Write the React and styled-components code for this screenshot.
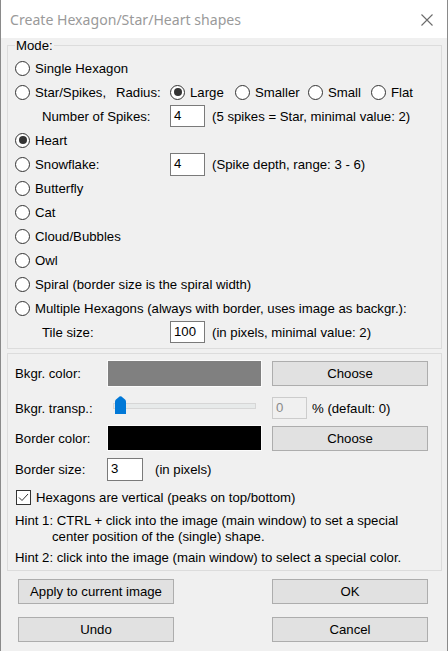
import React from 'react';
import styled, { createGlobalStyle } from 'styled-components';

const GlobalStyle = createGlobalStyle`
  html, body {
    margin: 0;
    padding: 0;
    background: #f0f0f0;
  }
  body {
    font-family: "Liberation Sans", Arial, sans-serif;
    font-size: 13.2px;
    color: #000;
  }
`;

const Window = styled.div`
  box-sizing: border-box;
  width: 448px;
  height: 651px;
  background: #f0f0f0;
  border-left: 1px solid #8a8a8a;
  border-right: 1px solid #8a8a8a;
  overflow: hidden;
`;

const TitleBar = styled.div`
  height: 38px;
  background: #fff;
  display: flex;
  align-items: center;
  justify-content: space-between;
  padding: 0 14px 0 9px;
  box-sizing: border-box;
`;

const Title = styled.div`
  font-family: "Noto Sans", "Open Sans", sans-serif;
  font-size: 14.1px;
  color: #9a9a9a;
  padding-top: 1px;
`;

const CloseIcon = styled.svg`
  width: 12px;
  height: 12px;
  margin-top: 1px;
`;

const Body = styled.div`
  padding: 0 5px 0 6px;
`;

const ModeGroup = styled.fieldset`
  margin: 0;
  padding: 3px 0 4px 7px;
  border: 1px solid #dcdcdc;
  min-width: 0;
`;

const Legend = styled.legend`
  margin-left: 0;
  padding: 0 1px;
  line-height: 15px;
`;

const Group = styled.div`
  margin-top: 4px;
  border: 1px solid #dcdcdc;
  padding: 6px 12px 4px 7px;
`;

const Row = styled.div`
  display: flex;
  align-items: center;
  height: ${p => p.$h || 24}px;
  margin-top: ${p => p.$top || 0}px;
  white-space: nowrap;
`;

const Cell = styled.div`
  display: flex;
  align-items: center;
  flex: none;
  width: ${p => (p.$w ? `${p.$w}px` : 'auto')};
  padding-left: ${p => p.$indent || 0}px;
  box-sizing: border-box;
  margin-left: ${p => p.$ml || 0}px;
`;

const Circle = styled.span`
  box-sizing: border-box;
  width: 15px;
  height: 15px;
  border: 1px solid #333;
  border-radius: 50%;
  background: #fff;
  display: flex;
  align-items: center;
  justify-content: center;
  flex: none;
  margin-right: 5px;
  &::after {
    content: '';
    width: 8px;
    height: 8px;
    border-radius: 50%;
    background: #333;
    display: ${p => (p.$on ? 'block' : 'none')};
  }
`;

const Radio = ({ on, children, w }) => (
  <Cell $w={w}>
    <Circle $on={on} />
    <span>{children}</span>
  </Cell>
);

const Input = styled.div`
  box-sizing: border-box;
  width: ${p => p.$w || 35}px;
  height: ${p => p.$h || 22}px;
  border: 1px solid ${p => (p.$disabled ? '#cccccc' : '#7a7a7a')};
  background: ${p => (p.$disabled ? '#f0f0f0' : '#fff')};
  color: ${p => (p.$disabled ? '#8a8a8a' : '#000')};
  padding: 2px 0 0 3px;
  line-height: 15px;
  flex: none;
`;

const Note = styled.span`
  margin-left: ${p => p.$ml || 7}px;
`;

const Label = styled.div`
  width: 92px;
  flex: none;
`;

const Swatch = styled.div`
  box-sizing: border-box;
  width: 155px;
  height: ${p => p.$h || 27}px;
  background: ${p => p.$color};
  border: 1px solid #fbfbfb;
  flex: none;
`;

const Button = styled.button`
  box-sizing: border-box;
  width: 156px;
  height: 25px;
  margin-left: ${p => p.$ml || 0}px;
  background: #e1e1e1;
  border: 1px solid #adadad;
  font-family: "Liberation Sans", Arial, sans-serif;
  font-size: 13.2px;
  color: #000;
  padding: 0;
  flex: none;
`;

const SliderBox = styled.div`
  position: relative;
  width: 155px;
  height: 24px;
  flex: none;
`;

const Track = styled.div`
  position: absolute;
  left: 6px;
  top: 7px;
  width: 141px;
  height: 4px;
  background: #e7eaea;
  border: 1px solid #d6d6d6;
`;

const Thumb = styled.svg`
  position: absolute;
  left: 8px;
  top: 0px;
  width: 11px;
  height: 18px;
`;

const CheckBox = styled.span`
  box-sizing: border-box;
  width: 15px;
  height: 15px;
  border: 1px solid #333;
  background: #fff;
  display: flex;
  align-items: center;
  justify-content: center;
  margin: 0 5px 0 1px;
  flex: none;
`;

const Hint = styled.div`
  margin-top: ${p => p.$top || 0}px;
  line-height: 16px;
`;

const HintLine = styled.div`
  padding-left: ${p => p.$indent || 0}px;
  white-space: nowrap;
`;

const ButtonGrid = styled.div`
  display: grid;
  grid-template-columns: 156px 156px;
  column-gap: 98px;
  row-gap: 13px;
  margin: 8px 0 0 11px;
`;

export default function App() {
  return (
    <>
      <GlobalStyle />
      <Window>
        <TitleBar>
          <Title>Create Hexagon/Star/Heart shapes</Title>
          <CloseIcon viewBox="0 0 12 12">
            <path d="M0.5 0.5 L11.5 11.5 M11.5 0.5 L0.5 11.5" stroke="#6b6b6b" strokeWidth="1.1" fill="none" />
          </CloseIcon>
        </TitleBar>
        <Body>
          <ModeGroup>
            <Legend>Mode:</Legend>
            <Row>
              <Radio>Single Hexagon</Radio>
            </Row>
            <Row>
              <Radio w={101}>Star/Spikes,</Radio>
              <Cell $w={54}>Radius:</Cell>
              <Radio on w={65}>Large</Radio>
              <Radio w={73}>Smaller</Radio>
              <Radio w={63}>Small</Radio>
              <Radio>Flat</Radio>
            </Row>
            <Row>
              <Cell $w={155} $indent={27}>Number of Spikes:</Cell>
              <Input>4</Input>
              <Note>(5 spikes = Star, minimal value: 2)</Note>
            </Row>
            <Row>
              <Radio on>Heart</Radio>
            </Row>
            <Row>
              <Radio w={155}>Snowflake:</Radio>
              <Input $h={23}>4</Input>
              <Note>(Spike depth, range: 3 - 6)</Note>
            </Row>
            <Row>
              <Radio>Butterfly</Radio>
            </Row>
            <Row>
              <Radio>Cat</Radio>
            </Row>
            <Row>
              <Radio>Cloud/Bubbles</Radio>
            </Row>
            <Row>
              <Radio>Owl</Radio>
            </Row>
            <Row>
              <Radio>Spiral (border size is the spiral width)</Radio>
            </Row>
            <Row>
              <Radio>Multiple Hexagons (always with border, uses image as backgr.):</Radio>
            </Row>
            <Row>
              <Cell $w={155} $indent={27}>Tile size:</Cell>
              <Input>100</Input>
              <Note>(in pixels, minimal value: 2)</Note>
            </Row>
          </ModeGroup>

          <Group>
            <Row $h={27}>
              <Label>Bkgr. color:</Label>
              <Swatch $color="#808080" />
              <Button $ml={10}>Choose</Button>
            </Row>
            <Row $h={24} $top={9}>
              <Label>Bkgr. transp.:</Label>
              <SliderBox>
                <Track />
                <Thumb viewBox="0 0 11 18">
                  <path d="M0 5.5 Q0 4.5 1 3.6 L4.5 0.6 Q5.5 -0.2 6.5 0.6 L10 3.6 Q11 4.5 11 5.5 L11 18 L0 18 Z" fill="#0078d7" />
                </Thumb>
              </SliderBox>
              <Cell $ml={10}>
                <Input $disabled>0</Input>
              </Cell>
              <Note $ml={5}>% (default: 0)</Note>
            </Row>
            <Row $h={26} $top={5}>
              <Label>Border color:</Label>
              <Swatch $color="#000" $h={26} />
              <Button $ml={10}>Choose</Button>
            </Row>
            <Row $h={23} $top={7}>
              <Label>Border size:</Label>
              <Input $w={36} $h={23}>3</Input>
              <Note $ml={12}>(in pixels)</Note>
            </Row>
            <Row $h={16} $top={8}>
              <CheckBox>
                <svg width="13" height="13" viewBox="0 0 13 13">
                  <path d="M2 6.5 L5 9.5 L11 3" stroke="#333" strokeWidth="1" fill="none" />
                </svg>
              </CheckBox>
              <span>Hexagons are vertical (peaks on top/bottom)</span>
            </Row>
            <Hint $top={8}>
              <HintLine>Hint 1: CTRL + click into the image (main window) to set a special</HintLine>
              <HintLine $indent={37}>center position of the (single) shape.</HintLine>
            </Hint>
            <Hint $top={5}>
              <HintLine>Hint 2: click into the image (main window) to select a special color.</HintLine>
            </Hint>
          </Group>

          <ButtonGrid>
            <Button>Apply to current image</Button>
            <Button>OK</Button>
            <Button>Undo</Button>
            <Button>Cancel</Button>
          </ButtonGrid>
        </Body>
      </Window>
    </>
  );
}
